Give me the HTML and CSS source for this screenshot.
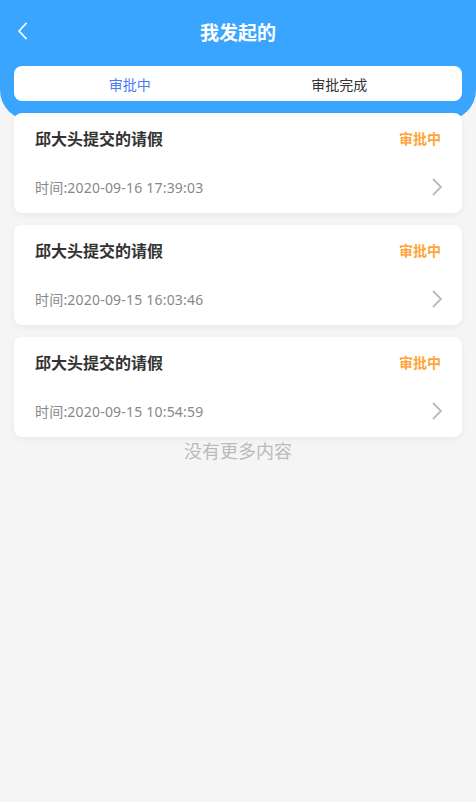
FILE: index.html
```html
<!DOCTYPE html>
<html lang="zh-CN">
<head>
    <meta charset="UTF-8">
    <meta name="viewport" content="width=device-width, initial-scale=1.0">
    <title>我发起的</title>
    <link rel="stylesheet" href="styles.css">
</head>
<body>
    <div class="header">
        <div class="nav">
            <svg class="back" width="12" height="18" viewBox="0 0 12 18">
                <path d="M10 1.5 L3 9 L10 16.5" fill="none" stroke="#fff" stroke-width="1.8" stroke-linecap="round" stroke-linejoin="round"/>
            </svg>
            <h1>我发起的</h1>
        </div>
        <div class="tabs">
            <div class="tab active">审批中</div>
            <div class="tab">审批完成</div>
        </div>
    </div>

    <div class="list">
        <div class="card">
            <div class="row">
                <span class="title">邱大头提交的请假</span>
                <span class="status">审批中</span>
            </div>
            <div class="row">
                <span class="time">时间:2020-09-16 17:39:03</span>
                <svg class="arrow" width="12" height="20" viewBox="0 0 12 20">
                    <path d="M2 2 L10 10 L2 18" fill="none" stroke="#bbb" stroke-width="1.8"/>
                </svg>
            </div>
        </div>
        <div class="card">
            <div class="row">
                <span class="title">邱大头提交的请假</span>
                <span class="status">审批中</span>
            </div>
            <div class="row">
                <span class="time">时间:2020-09-15 16:03:46</span>
                <svg class="arrow" width="12" height="20" viewBox="0 0 12 20">
                    <path d="M2 2 L10 10 L2 18" fill="none" stroke="#bbb" stroke-width="1.8"/>
                </svg>
            </div>
        </div>
        <div class="card">
            <div class="row">
                <span class="title">邱大头提交的请假</span>
                <span class="status">审批中</span>
            </div>
            <div class="row">
                <span class="time">时间:2020-09-15 10:54:59</span>
                <svg class="arrow" width="12" height="20" viewBox="0 0 12 20">
                    <path d="M2 2 L10 10 L2 18" fill="none" stroke="#bbb" stroke-width="1.8"/>
                </svg>
            </div>
        </div>
        <div class="no-more">没有更多内容</div>
    </div>
</body>
</html>
```

FILE: styles.css
```css
body {
    font-family: 'Noto Sans', 'Noto Sans CJK SC', sans-serif;
    margin: 0;
    padding: 0;
    background: #f5f5f5;
    color: #333;
}
.header {
    background: #3aa5ff;
    height: 120px;
    border-radius: 0 0 30px 30px;
    padding: 0 14px;
    box-sizing: border-box;
}
.nav {
    height: 64px;
    display: flex;
    align-items: center;
    justify-content: center;
    position: relative;
}
.back {
    position: absolute;
    left: 2px;
    top: 22px;
}
.nav h1 {
    margin: 0;
    font-size: 19px;
    font-weight: bold;
    color: #fff;
}
.tabs {
    margin-top: 2px;
    height: 35px;
    background: #fff;
    border-radius: 8px;
    display: flex;
    padding: 0 18px 0 11px;
}
.tab {
    flex: 1;
    display: flex;
    align-items: center;
    justify-content: center;
    font-size: 14px;
    color: #333;
}
.tab.active {
    color: #4a7bf7;
}
.list {
    padding: 0 14px;
    margin-top: -7px;
    display: flex;
    flex-direction: column;
    gap: 12px;
}
.card {
    background: #fff;
    border-radius: 8px;
    box-shadow: 0 2px 6px rgba(0, 0, 0, 0.05);
    height: 100px;
    padding: 13px 21px 14px;
    box-sizing: border-box;
    display: flex;
    flex-direction: column;
    justify-content: space-between;
}
.row {
    display: flex;
    align-items: center;
    justify-content: space-between;
    height: 24px;
}
.title {
    font-size: 16px;
    font-weight: bold;
    color: #333;
}
.status {
    font-size: 14px;
    font-weight: bold;
    color: #ffa53a;
}
.time {
    font-size: 14px;
    color: #888;
    letter-spacing: 0.2px;
}
.arrow {
    margin-right: -2px;
}
.no-more {
    margin-top: -12px;
    text-align: center;
    font-size: 18px;
    color: #bbb;
}
```
